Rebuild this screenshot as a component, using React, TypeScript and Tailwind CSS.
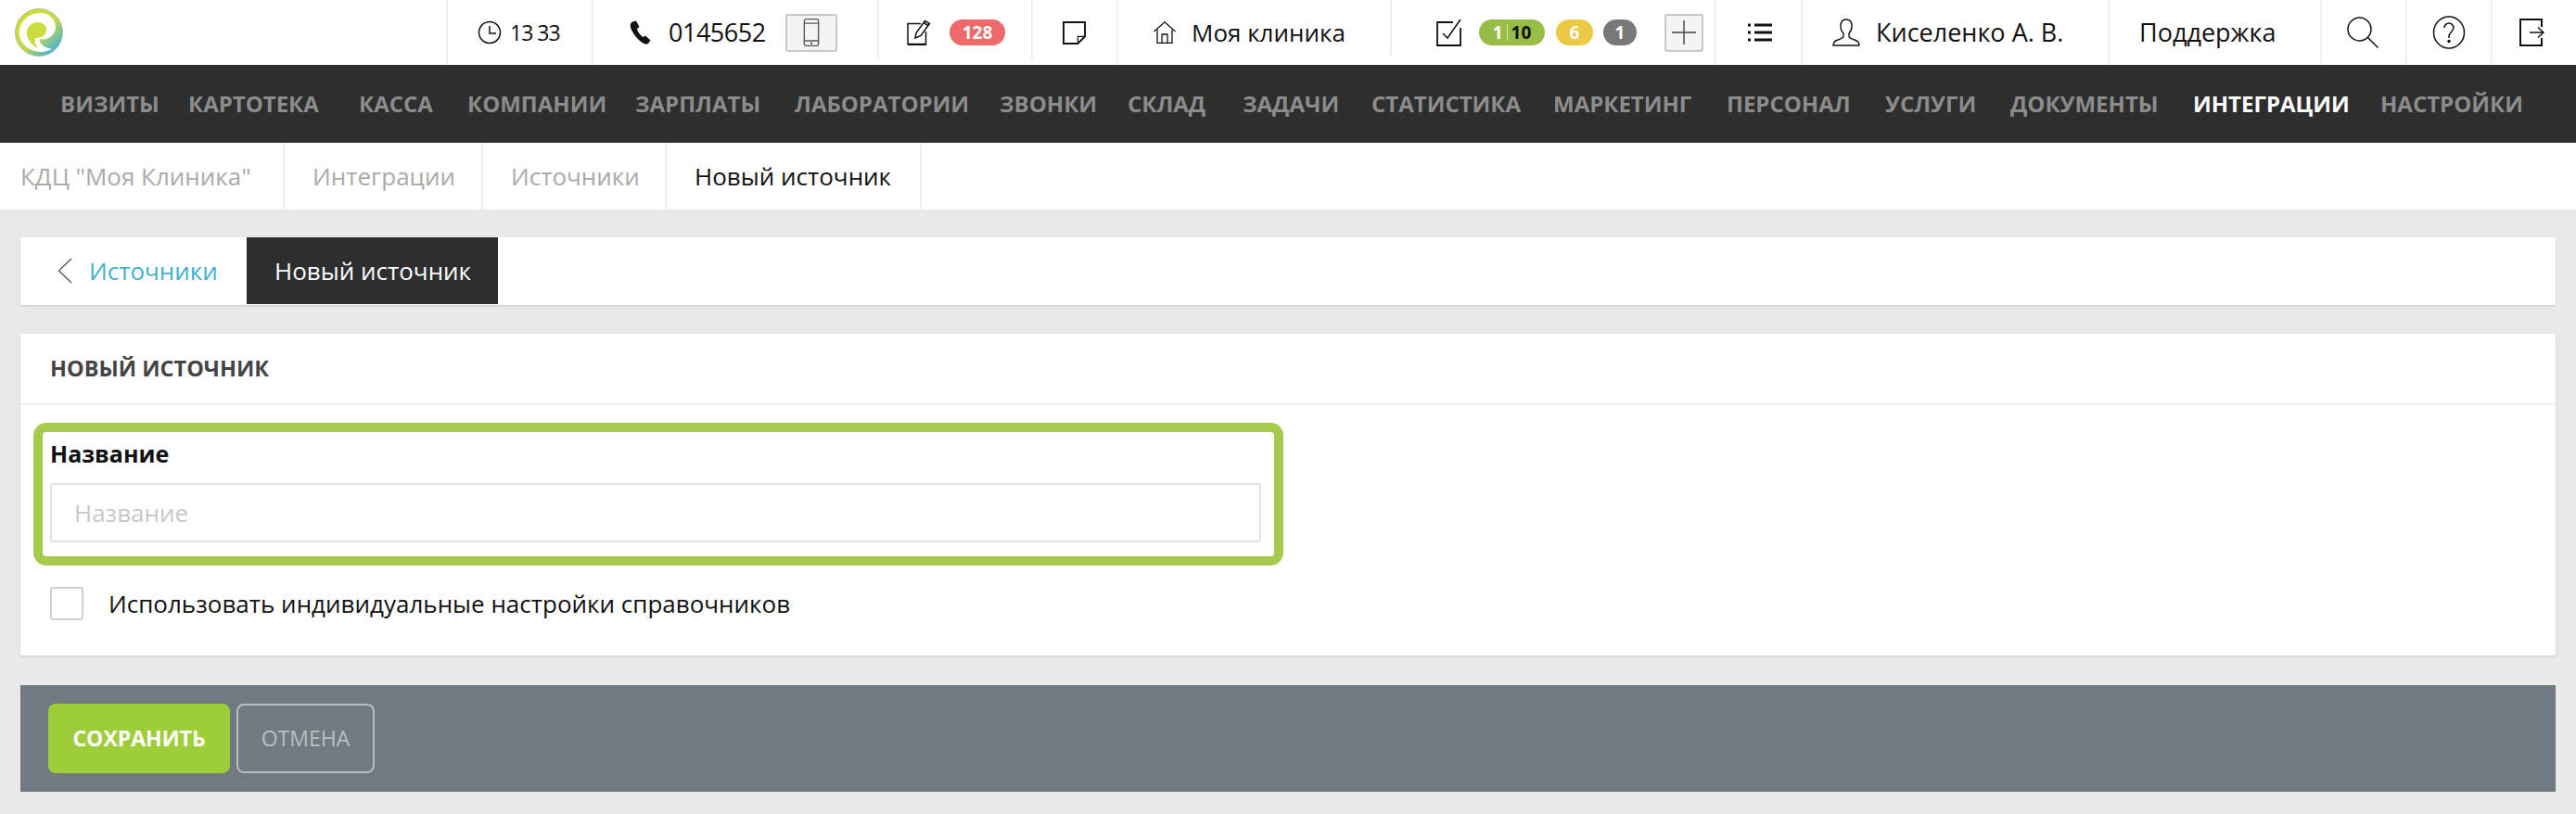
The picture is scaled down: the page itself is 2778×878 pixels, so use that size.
const font = 'font-["Open_Sans",sans-serif]';

const Logo = () => (
  <svg viewBox="0 0 52 52" className="w-[52px] h-[52px]">
    <defs>
      <linearGradient id="lg" x1="0.15" y1="0.1" x2="0.85" y2="0.9">
        <stop offset="0" stopColor="#cfdf30" />
        <stop offset="0.55" stopColor="#c4da45" />
        <stop offset="1" stopColor="#3fb2e0" />
      </linearGradient>
    </defs>
    <circle cx="26" cy="26" r="25.5" fill="url(#lg)" stroke="#9a9a9a" strokeWidth="0.6" />
    <path d="M5 30C3 16 14 5 27 5c11 0 17 7 17 16-1 9-10 14-17 12-1 4 3 9 13 11-10 5-20 3-27-2-5-4-7-8-8-12z" fill="#fff" />
    <path d="M13 28c-1-8 6-14 13-13 7 1 10 7 7 12-2 4-7 5-11 5-1 4 0 7 3 11-7-3-11-9-12-15z" fill="#cbdc3c" />
  </svg>
);

const Clock = () => (
  <svg viewBox="0 0 26 26" className="w-[26px] h-[26px]" fill="none" stroke="#111" strokeWidth="1.5">
    <circle cx="13" cy="13" r="11.5" />
    <path d="M13 6v8h7" />
  </svg>
);

const Phone = () => (
  <svg viewBox="0 0 26 26" className="w-[26px] h-[26px]" fill="#111">
    <path d="M4 1.5 8 .5l3.5 6.5-2.5 2c.5 3 3.5 7 6.5 9l2.5-1.5 5.5 5-2.5 3.5c-1 .7-3 1-5-.2C9 21 3 12 1.8 6.5 1.5 4 2.5 2.5 4 1.5z" />
  </svg>
);

const Mobile = () => (
  <svg viewBox="0 0 20 34" className="w-[18px] h-[32px]" fill="none" stroke="#555" strokeWidth="1.5">
    <rect x="1.5" y="1" width="17" height="32" rx="2" />
    <path d="M1.5 6h17M1.5 27h17" />
    <circle cx="10" cy="30" r="0.6" fill="#555" />
  </svg>
);

const Pencil = () => (
  <svg viewBox="0 0 28 28" className="w-[28px] h-[28px]" fill="none" stroke="#111" strokeWidth="1.5">
    <path d="M15 4.5H1v22h19.5V13" />
    <path d="M1 27h20" strokeWidth="2" />
    <path d="M9 20l1-5.5L19.5 1.5l5 3L15 17.5z" fill="#fff" />
    <path d="M18 3.5l5 3" />
  </svg>
);

const Sticky = () => (
  <svg viewBox="0 0 26 26" className="w-[25px] h-[25px]" fill="none" stroke="#111" strokeWidth="2">
    <path d="M1 1h24v16l-8 8H1z" />
    <path d="M17 25v-8h8" strokeWidth="1.2" />
  </svg>
);

const Home = () => (
  <svg viewBox="0 0 24 24" className="w-[24px] h-[24px]" fill="none" stroke="#111" strokeWidth="1.3">
    <path d="M.5 11 12 .8 23.5 11" />
    <path d="M4 9v14.5h16V9" />
    <path d="M9 23.5V14h6v9.5" />
  </svg>
);

const Check = () => (
  <svg viewBox="0 0 28 30" className="w-[28px] h-[30px]" fill="none" stroke="#111" strokeWidth="1.5">
    <path d="M18 4H1v25h25V10" strokeWidth="1.8" />
    <path d="M7 16l5 5L26 1" />
  </svg>
);

const ListIcon = () => (
  <svg viewBox="0 0 26 20" className="w-[26px] h-[20px]" fill="#111">
    <rect x="0" y="0.5" width="3" height="3" />
    <rect x="0" y="8.5" width="3" height="3" />
    <rect x="0" y="16.5" width="3" height="3" />
    <rect x="7" y="0.5" width="19" height="3" />
    <rect x="7" y="8.5" width="19" height="3" />
    <rect x="7" y="16.5" width="19" height="3" />
  </svg>
);

const User = () => (
  <svg viewBox="0 0 30 30" className="w-[30px] h-[30px]" fill="none" stroke="#111" strokeWidth="1.4">
    <path d="M15 1c-4 0-6 3-6 7 0 3 1 6 3 8v3c0 2-3 3-6 4s-5 3-5 6h28c0-3-2-5-5-6s-6-2-6-4v-3c2-2 3-5 3-8 0-4-2-7-6-7z" />
  </svg>
);

const Search = () => (
  <svg viewBox="0 0 34 34" className="w-[34px] h-[34px]" fill="none" stroke="#111" strokeWidth="1.5">
    <circle cx="13.5" cy="13.5" r="12.5" />
    <path d="M22.5 22.5 33.5 33.5" />
  </svg>
);

const Help = () => (
  <svg viewBox="0 0 36 36" className="w-[36px] h-[36px]" fill="none" stroke="#111" strokeWidth="1.5">
    <ellipse cx="18" cy="18" rx="16.5" ry="17" />
    <path d="M13 13c0-3 2.5-5 5-5s5 2 5 5c0 4-5 5-5 9v2" />
    <circle cx="18" cy="27.5" r="1" fill="#111" />
  </svg>
);

const Logout = () => (
  <svg viewBox="0 0 27 30" className="w-[27px] h-[30px]" fill="none" stroke="#111" strokeWidth="2">
    <path d="M24 9V1H1v28h23v-8" />
    <path d="M11 15h15M20 9.5l6 5.5-6 5.5" strokeWidth="1.5" />
  </svg>
);

const Chevron = () => (
  <svg viewBox="0 0 16 28" className="w-[16px] h-[28px]" fill="none" stroke="#555" strokeWidth="1.3">
    <path d="M15 1 1.5 14 15 27" />
  </svg>
);

const Plus = () => (
  <svg viewBox="0 0 26 26" className="w-[26px] h-[26px]" fill="none" stroke="#444" strokeWidth="1.4">
    <path d="M13 0v26M0 13h26" />
  </svg>
);

const menu = [
  { label: 'ВИЗИТЫ', width: 'w-[138px]' },
  { label: 'КАРТОТЕКА', width: 'w-[184px]' },
  { label: 'КАССА', width: 'w-[117px]' },
  { label: 'КОМПАНИИ', width: 'w-[181px]' },
  { label: 'ЗАРПЛАТЫ', width: 'w-[172px]' },
  { label: 'ЛАБОРАТОРИИ', width: 'w-[221px]' },
  { label: 'ЗВОНКИ', width: 'w-[138px]' },
  { label: 'СКЛАД', width: 'w-[124px]' },
  { label: 'ЗАДАЧИ', width: 'w-[139px]' },
  { label: 'СТАТИСТИКА', width: 'w-[196px]' },
  { label: 'МАРКЕТИНГ', width: 'w-[187px]' },
  { label: 'ПЕРСОНАЛ', width: 'w-[171px]' },
  { label: 'УСЛУГИ', width: 'w-[135px]' },
  { label: 'ДОКУМЕНТЫ', width: 'w-[197px]' },
  { label: 'ИНТЕГРАЦИИ', width: 'w-[202px]' },
  { label: 'НАСТРОЙКИ', width: 'w-auto' },
];

const Badge = ({ className, children }: { className: string; children: React.ReactNode }) => (
  <span className={`h-[28px] rounded-[14px] flex items-center justify-center text-[19px] font-bold text-white ${className}`}>
    {children}
  </span>
);

const Divider = ({ className = 'h-full' }: { className?: string }) => (
  <div className={`w-[2px] bg-[#f0f0f0] shrink-0 ${className}`} />
);

export default function App() {
  return (
    <div className={`w-[2778px] h-[878px] bg-[#e9e9e9] overflow-hidden ${font}`}>
      {/* Top bar */}
      <header className="h-[70px] bg-white flex text-[26px] text-[#111]">
        <div className="w-[481px] flex items-center pl-[16px]">
          <Logo />
        </div>
        <Divider />
        <div className="w-[155px] flex items-center pl-[32px] gap-[9px]">
          <Clock />
          <span className="text-[23px] tracking-[-1px]">13 33</span>
        </div>
        <Divider />
        <div className="w-[306px] flex items-center pl-[38px]">
          <Phone />
          <span className="ml-[17px] text-[27px] tracking-[-0.5px]">0145652</span>
          <button className="ml-[21px] w-[56px] h-[41px] bg-[#f4f4f4] border-2 border-[#c8c8c8] rounded-[3px] flex items-center justify-center">
            <Mobile />
          </button>
        </div>
        <Divider className="h-[65px]" />
        <div className="w-[164px] flex items-center pl-[30px]">
          <Pencil />
          <Badge className="ml-[18px] w-[60px] bg-[#ec6a6a]">128</Badge>
        </div>
        <Divider className="h-[64px]" />
        <div className="w-[90px] flex items-center pl-[32px]">
          <Sticky />
        </div>
        <Divider />
        <div className="w-[293px] flex items-center pl-[38px]">
          <Home />
          <span className="ml-[17px] whitespace-nowrap">Моя клиника</span>
        </div>
        <Divider className="h-[61px]" />
        <div className="w-[348px] flex items-center pl-[48px]">
          <Check />
          <Badge className="ml-[18px] w-[71px] bg-[#97bd48] gap-[4px]">
            1<span className="w-px h-[18px] bg-white/70" /><span className="text-[#111]">10</span>
          </Badge>
          <Badge className="ml-[12px] w-[40px] bg-[#ecc844]">6</Badge>
          <Badge className="ml-[11px] w-[36px] bg-[#787878]">1</Badge>
          <button className="ml-[30px] w-[42px] h-[41px] bg-[#f4f4f4] border-2 border-[#c8c8c8] rounded-[3px] flex items-center justify-center">
            <Plus />
          </button>
        </div>
        <Divider />
        <div className="w-[91px] flex items-center pl-[34px]">
          <ListIcon />
        </div>
        <Divider />
        <div className="w-[329px] flex items-center pl-[32px]">
          <User />
          <span className="ml-[17px] text-[27px] whitespace-nowrap">Киселенко А. В.</span>
        </div>
        <Divider />
        <div className="w-[227px] flex items-center pl-[32px]">
          <span className="text-[27px]">Поддержка</span>
        </div>
        <Divider />
        <div className="w-[90px] flex items-center pl-[27px]">
          <Search />
        </div>
        <Divider />
        <div className="w-[90px] flex items-center pl-[27px]">
          <Help />
        </div>
        <Divider />
        <div className="flex-1 flex items-center pl-[29px]">
          <Logout />
        </div>
      </header>

      {/* Main menu */}
      <nav className="h-[84px] bg-[#2e2e2e] flex items-center pl-[65px]">
        {menu.map((item) => (
          <a
            key={item.label}
            className={`${item.width} text-[24px] font-bold whitespace-nowrap ${item.label === 'ИНТЕГРАЦИИ' ? 'text-white' : 'text-[#8c8c8c]'}`}
          >
            {item.label}
          </a>
        ))}
      </nav>

      {/* Breadcrumbs */}
      <div className="h-[72px] bg-white flex text-[26px] text-[#aaa]">
        <div className="w-[307px] flex items-center pl-[22px] border-r-2 border-[#f0f0f0]">КДЦ "Моя Клиника"</div>
        <div className="w-[214px] flex items-center pl-[30px] border-r-2 border-[#f0f0f0]">Интеграции</div>
        <div className="w-[198px] flex items-center pl-[30px] border-r-2 border-[#f0f0f0]">Источники</div>
        <div className="w-[275px] flex items-center pl-[30px] border-r-2 border-[#f0f0f0] text-[#111]">Новый источник</div>
      </div>

      <main className="px-[22px] pt-[30px]">
        {/* Tabs */}
        <div className="h-[73px] bg-white rounded-[2px] shadow-[0_1px_2px_rgba(0,0,0,0.15)] flex">
          <a className="w-[244px] h-[72px] flex items-center pl-[40px] text-[26px] text-[#3fb1cf]">
            <Chevron />
            <span className="ml-[18px]">Источники</span>
          </a>
          <div className="w-[271px] h-[72px] bg-[#2e2e2e] flex items-center pl-[30px] text-[26px] text-white">Новый источник</div>
        </div>

        {/* Form card */}
        <section className="mt-[31px] h-[347px] bg-white rounded-[2px] shadow-[0_1px_3px_rgba(0,0,0,0.15)]">
          <div className="h-[77px] flex items-center pl-[32px] border-b-2 border-[#f0f0f0] text-[23.5px] font-bold text-[#444]">
            НОВЫЙ ИСТОЧНИК
          </div>
          <div className="pt-[19px] pl-[14px]">
            <div className="w-[1348px] h-[154px] border-[10px] border-[#a6cb4c] rounded-[14px] pl-[8px] pr-[14px] pt-[6px]">
              <label className="block text-[25px] font-bold text-[#111] leading-[34px]">Название</label>
              <input
                placeholder="Название"
                className="mt-[15px] w-full h-[64px] border-2 border-[#e2e2e2] rounded-[3px] px-[24px] text-[26px] placeholder:text-[#c8c8c8] outline-none"
              />
            </div>
            <label className="mt-[20px] ml-[18px] flex items-center">
              <span className="w-[36px] h-[36px] border-2 border-[#d0d0d0] rounded-[3px]" />
              <span className="ml-[27px] pt-[2px] text-[26px] text-[#111]">Использовать индивидуальные настройки справочников</span>
            </label>
          </div>
        </section>

        {/* Footer actions */}
        <div className="mt-[32px] h-[115px] bg-[#6f7b80] flex items-center pl-[30px]">
          <button className="w-[196px] h-[75px] bg-[#9ecd3a] rounded-[8px] text-[23px] font-bold text-white">СОХРАНИТЬ</button>
          <button className="ml-[7px] w-[149px] h-[75px] border-2 border-[#b4c0c2] rounded-[8px] text-[23px] text-[#b4c0c2]">ОТМЕНА</button>
        </div>
      </main>
    </div>
  );
}
